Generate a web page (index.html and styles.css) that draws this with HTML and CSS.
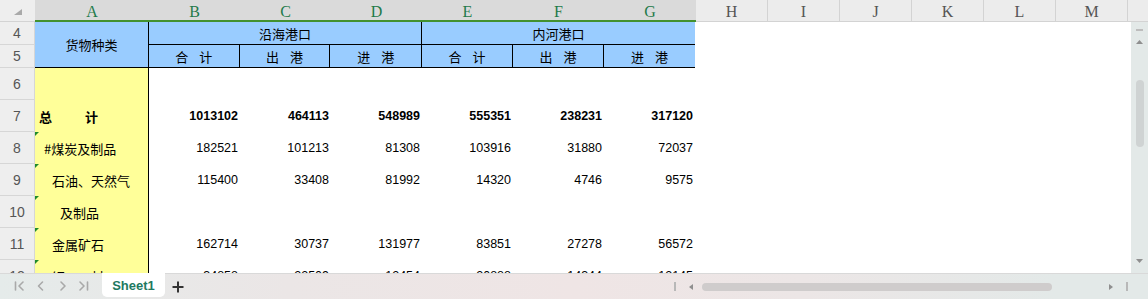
FILE: index.html
```html
<!DOCTYPE html>
<html lang="zh-CN">
<head>
<meta charset="utf-8">
<title>Sheet1</title>
<link rel="stylesheet" href="styles.css">
</head>
<body>
<div class="app">
  <div class="colhead">
    <div class="ch-corner">
      <svg width="8" height="6" viewBox="0 0 8 6"><polygon points="8,0 8,6 0,6" fill="#a9a9a9"/></svg>
    </div>
    <div class="ch sel w-a">A</div>
    <div class="ch sel w-n">B</div>
    <div class="ch sel w-n">C</div>
    <div class="ch sel w-n">D</div>
    <div class="ch sel w-n">E</div>
    <div class="ch sel w-n">F</div>
    <div class="ch sel w-n">G</div>
    <div class="ch w-x">H</div>
    <div class="ch w-x">I</div>
    <div class="ch w-x">J</div>
    <div class="ch w-x">K</div>
    <div class="ch w-x">L</div>
    <div class="ch w-x">M</div>
    <div class="ch ch-fill"></div>
  </div>

  <div class="body">
    <div class="grid">
      <div class="hdr-block">
        <div class="rh-stack">
          <div class="rh rh-4">4</div>
          <div class="rh rh-5">5</div>
        </div>
        <div class="hb-a">货物种类</div>
        <div class="grp grp-line">
          <div class="grp-title">沿海港口</div>
          <div class="grp-sub">
            <div class="sub sub-line"><span>合</span><span>计</span></div>
            <div class="sub sub-line"><span>出</span><span>港</span></div>
            <div class="sub"><span>进</span><span>港</span></div>
          </div>
        </div>
        <div class="grp">
          <div class="grp-title">内河港口</div>
          <div class="grp-sub">
            <div class="sub sub-line"><span>合</span><span>计</span></div>
            <div class="sub sub-line"><span>出</span><span>港</span></div>
            <div class="sub"><span>进</span><span>港</span></div>
          </div>
        </div>
      </div>

      <div class="row row-6">
        <div class="rh">6</div>
        <div class="ca"></div>
      </div>

      <div class="row bold">
        <div class="rh">7</div>
        <div class="ca ind-0"><span>总</span><span class="ji">计</span></div>
        <div class="num">1013102</div>
        <div class="num">464113</div>
        <div class="num">548989</div>
        <div class="num">555351</div>
        <div class="num">238231</div>
        <div class="num">317120</div>
      </div>

      <div class="row">
        <div class="rh">8</div>
        <div class="ca tri ind-1">#煤炭及制品</div>
        <div class="num">182521</div>
        <div class="num">101213</div>
        <div class="num">81308</div>
        <div class="num">103916</div>
        <div class="num">31880</div>
        <div class="num">72037</div>
      </div>

      <div class="row">
        <div class="rh">9</div>
        <div class="ca tri ind-2">石油、天然气</div>
        <div class="num">115400</div>
        <div class="num">33408</div>
        <div class="num">81992</div>
        <div class="num">14320</div>
        <div class="num">4746</div>
        <div class="num">9575</div>
      </div>

      <div class="row">
        <div class="rh">10</div>
        <div class="ca tri ind-3">及制品</div>
      </div>

      <div class="row">
        <div class="rh">11</div>
        <div class="ca tri ind-2">金属矿石</div>
        <div class="num">162714</div>
        <div class="num">30737</div>
        <div class="num">131977</div>
        <div class="num">83851</div>
        <div class="num">27278</div>
        <div class="num">56572</div>
      </div>

      <div class="row">
        <div class="rh">12</div>
        <div class="ca tri ind-2">钢　　材</div>
        <div class="num">34858</div>
        <div class="num">22509</div>
        <div class="num">12454</div>
        <div class="num">20888</div>
        <div class="num">14344</div>
        <div class="num">12145</div>
      </div>
    </div>

    <div class="vscroll">
      <div class="vs-dash"></div>
      <svg class="vs-up" width="7" height="4" viewBox="0 0 7 4"><polygon points="3.5,0 7,4 0,4" fill="#8f8f8f"/></svg>
      <div class="vs-thumb"></div>
      <div class="vs-space"></div>
      <svg class="vs-down" width="7" height="4" viewBox="0 0 7 4"><polygon points="0,0 7,0 3.5,4" fill="#8f8f8f"/></svg>
    </div>
  </div>

  <div class="tabbar">
    <svg class="nav" width="102" height="26" viewBox="0 0 102 26">
      <g fill="none" stroke="#a9a9a9" stroke-width="1.6" stroke-linecap="round" stroke-linejoin="round">
        <line x1="15.5" y1="9" x2="15.5" y2="17"/>
        <polyline points="23,9 19,13 23,17"/>
        <polyline points="42.5,9 38.5,13 42.5,17"/>
        <polyline points="61,9 65,13 61,17"/>
        <polyline points="80,9 84,13 80,17"/>
        <line x1="87.5" y1="9" x2="87.5" y2="17"/>
      </g>
    </svg>
    <div class="tab">Sheet1</div>
    <svg class="plus" width="12" height="12" viewBox="0 0 12 12">
      <g stroke="#333" stroke-width="2"><line x1="6" y1="0.5" x2="6" y2="11.5"/><line x1="0.5" y1="6" x2="11.5" y2="6"/></g>
    </svg>
    <div class="tb-space"></div>
    <div class="hscroll">
      <div class="hs-bar"></div>
      <svg class="hs-left" width="4" height="6" viewBox="0 0 4 6"><polygon points="4,0 4,6 0,3" fill="#8f8f8f"/></svg>
      <div class="hs-thumb"></div>
      <svg class="hs-right" width="4" height="6" viewBox="0 0 4 6"><polygon points="0,0 4,3 0,6" fill="#8f8f8f"/></svg>
      <div class="hs-bar hs-bar-r"></div>
    </div>
  </div>
</div>
</body>
</html>
```

FILE: styles.css
```css
* { box-sizing: border-box; }
html, body { margin: 0; padding: 0; background: #fff; }
body { width: 1148px; height: 299px; overflow: hidden; font-family: "Noto Sans CJK SC", "Liberation Sans", sans-serif; color: #000; }

.app { width: 1148px; height: 299px; display: flex; flex-direction: column; }

/* column header */
.colhead { height: 22px; display: flex; flex: none; }
.ch-corner { width: 35px; background: #eeeeee; border-bottom: 1px solid #d3d3d3; display: flex; justify-content: flex-end; align-items: flex-start; padding: 9px 13px 0 0; }
.ch { height: 22px; font-family: "Liberation Serif", serif; font-size: 16px; line-height: 24px; text-align: center; color: #555; background: #ececec; border-bottom: 1px solid #d3d3d3; }
.ch.sel { background: #dadada; color: #1f7a4a; border-bottom: 2px solid #43912f; }
.w-a { width: 114px; }
.w-n { width: 91px; }
.w-n:nth-child(8) { width: 92px; }
.w-x { width: 72px; border-right: 1px solid #d3d3d3; }
.ch-fill { flex: 1; }

/* body */
.body { height: 251px; display: flex; flex: none; }
.grid { flex: 1; overflow: hidden; display: flex; flex-direction: column; }

.rh { width: 35px; flex: none; background: #eeeeee; border-bottom: 1px solid #d6d6d6; border-right: 1px solid #d6d6d6; color: #555; font-family: "Liberation Sans", sans-serif; font-size: 14px; display: flex; align-items: center; justify-content: center; }

.hdr-block { display: flex; height: 46px; flex: none; }
.rh-stack { display: flex; flex-direction: column; }
.rh-4 { height: 23px; }
.rh-5 { height: 23px; }

.hb-a { width: 114px; background: #99ccff; border-right: 1px solid #000; border-bottom: 1px solid #000; font-size: 13px; display: flex; align-items: center; justify-content: center; }
.grp { width: 273px; display: flex; flex-direction: column; background: #99ccff; border-bottom: 1px solid #000; }
.grp-line { border-right: 1px solid #000; }
.grp-title { height: 23px; border-bottom: 1px solid #000; font-size: 13px; display: flex; align-items: center; justify-content: center; }
.grp-sub { flex: 1; display: flex; }
.sub { width: 91px; display: flex; align-items: center; justify-content: center; gap: 11px; font-size: 13px; }
.sub-line { border-right: 1px solid #000; }

.row { display: flex; height: 32px; flex: none; }
.ca { width: 114px; flex: none; height: 32px; background: #ffff99; border-right: 1px solid #000; font-size: 13px; display: flex; align-items: center; white-space: pre; position: relative; }
.ind-0 { padding-left: 4px; }
.ind-1 { padding-left: 9px; }
.ind-2 { padding-left: 17px; }
.ind-3 { padding-left: 25px; }
.ji { margin-left: 33px; }
.tri::before { content: ""; position: absolute; left: 0; top: 0; width: 0; height: 0; border-top: 4px solid #1f8a2a; border-right: 4px solid transparent; }

.num { width: 91px; flex: none; padding-right: 2px; font-family: "Liberation Sans", sans-serif; font-size: 12.5px; display: flex; align-items: center; justify-content: flex-end; }
.bold .num, .bold .ca { font-weight: bold; }

/* vertical scrollbar */
.vscroll { width: 17px; flex: none; background: #e3e9e8; display: flex; flex-direction: column; align-items: center; }
.vs-dash { width: 7px; height: 2px; background: #bdbdbd; margin-top: 7px; }
.vs-up { margin-top: 9px; }
.vs-thumb { width: 8px; height: 67px; border-radius: 4px; background: #cfd3d3; margin-top: 36px; }
.vs-space { flex: 1; }
.vs-down { margin-bottom: 10px; }

/* tab bar */
.tabbar { height: 26px; flex: none; display: flex; align-items: flex-start; border-top: 1px solid #d9d9d9; background: linear-gradient(90deg, #e5ebea 0%, #ebe6e6 25%, #efe5e5 50%, #ece6e6 70%, #e3e9e8 92%); }
.nav { flex: none; margin-top: -1px; }
.tab { width: 63px; height: 24px; margin-top: -1px; background: #fff; border-radius: 0 0 5px 5px; color: #21795f; font-family: "Liberation Sans", sans-serif; font-weight: bold; font-size: 13px; display: flex; align-items: center; justify-content: center; }
.plus { flex: none; margin: 7px 0 0 7px; }
.tb-space { flex: 1; }
.hscroll { width: 478px; height: 25px; display: flex; align-items: center; }
.hs-bar { width: 2px; height: 9px; background: #b8b8b8; margin-left: 4px; }
.hs-left { margin-left: 13px; }
.hs-thumb { width: 350px; height: 8px; border-radius: 4px; background: #cfcccc; margin-left: 9px; }
.hs-right { margin-left: 57px; }
.hs-bar-r { margin-left: 13px; }
```
